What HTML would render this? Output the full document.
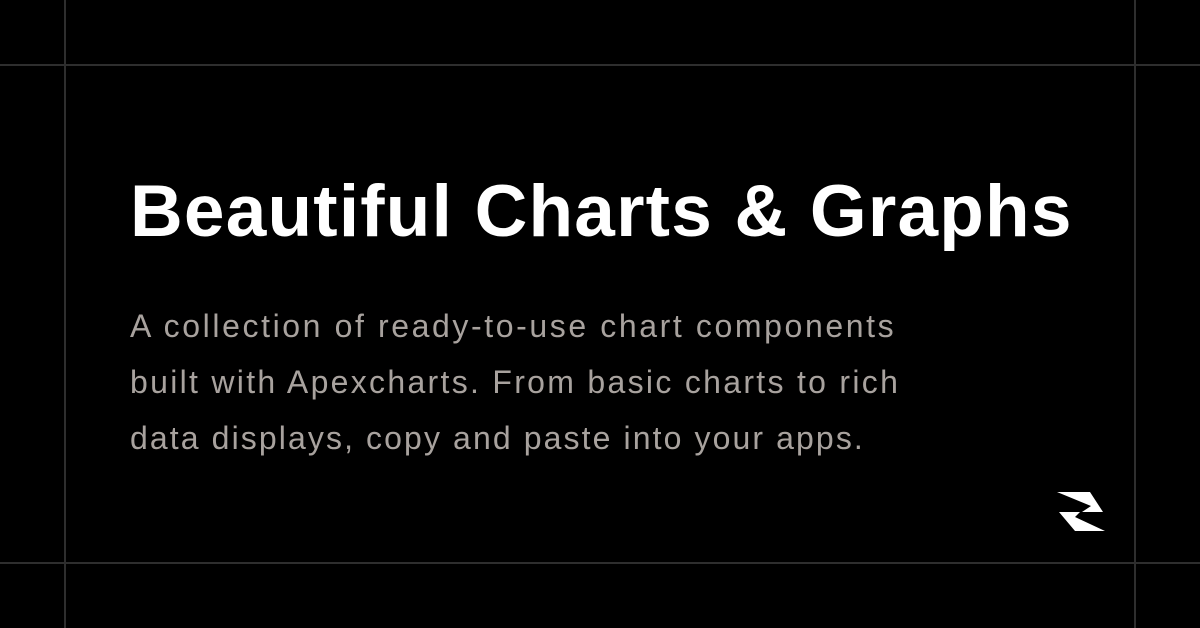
<!DOCTYPE html>
<html><head><style>
html,body{margin:0;padding:0;background:#000;}
body{width:1200px;height:628px;position:relative;overflow:hidden;font-family:"Liberation Sans",sans-serif;}
.l{position:absolute;background:#2e2e2e;}
h1{position:absolute;left:130px;top:167px;margin:0;font-size:73px;font-weight:bold;color:#fff;letter-spacing:1.2px;white-space:nowrap;line-height:90px;}
p{position:absolute;left:130px;top:298px;margin:0;font-size:32px;line-height:56px;color:#a8a29e;white-space:nowrap;letter-spacing:2.6px;}
</style></head><body>
<div class="l" style="left:64px;top:0;width:2px;height:628px"></div>
<div class="l" style="left:1134px;top:0;width:2px;height:628px"></div>
<div class="l" style="left:0;top:64px;width:1200px;height:2px"></div>
<div class="l" style="left:0;top:562px;width:1200px;height:2px"></div>
<h1>Beautiful Charts &amp; Graphs</h1>
<p>A collection of ready-to-use chart components<br><span style="letter-spacing:2.3px">built with Apexcharts. From basic charts to rich</span><br><span style="letter-spacing:2.1px">data displays, copy and paste into your apps.</span></p>
<svg style="position:absolute;left:0;top:0" width="1200" height="628">
<polygon fill="#fff" points="1057,492 1090,492 1103,512 1082,512 1091,506"/>
<polygon fill="#fff" points="1059,512 1080,512 1075,517 1105,531 1075,531"/>
</svg>
</body></html>
